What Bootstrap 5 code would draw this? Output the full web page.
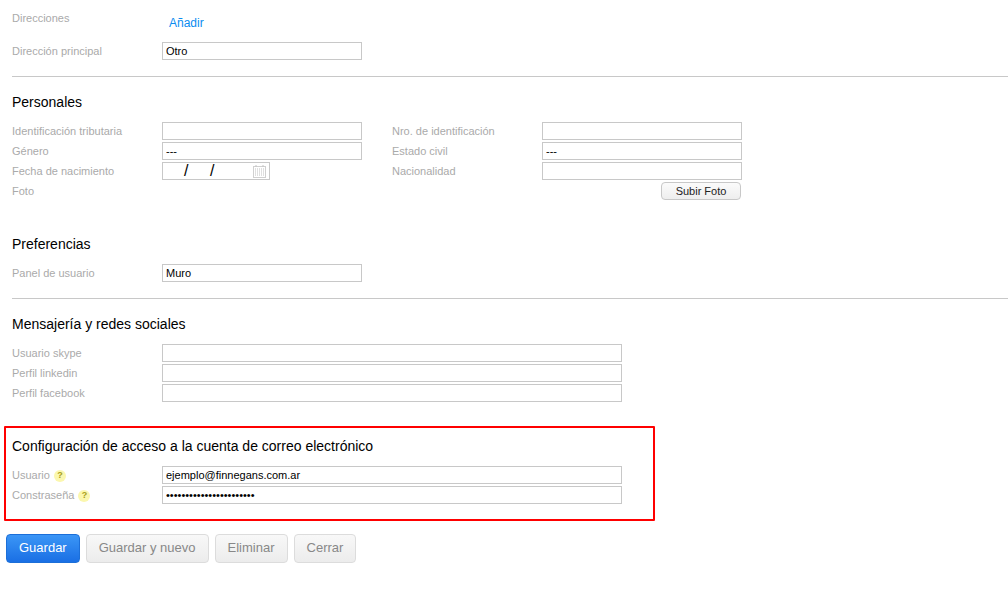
<!DOCTYPE html>
<html lang="es">
<head>
<meta charset="utf-8">
<title>Perfil</title>
<link href="https://cdn.jsdelivr.net/npm/bootstrap@5.3.0/dist/css/bootstrap.min.css" rel="stylesheet">
<style>
html,body{height:598px;overflow:hidden;background:#fff}
body{font-family:"Liberation Sans",Arial,sans-serif;font-size:11px;color:#000}
.sheet{padding:0 0 0 12px}
.frow{height:20px;align-items:center}
.flabel{width:150px;flex:none;color:#aaa;font-size:11px;line-height:14px;margin:0;display:flex;align-items:center}
.finput{display:block;width:200px;height:18px;padding:0 3px;border:1px solid #c8c8c8;border-radius:0;background:#fff;color:#000;font:11px "Liberation Sans",Arial,sans-serif;line-height:16px;outline:0}
.finput.wide{width:460px}
.addrow{height:41px;padding-top:11px}
.addrow .flabel{align-self:flex-start}
.addlink{color:#0a8cf0;font-size:12px;line-height:14px;text-decoration:none;margin:5px 0 0 7px}
.rule{margin:15px 0 0;border:0;border-top:1px solid #c8c8c8;opacity:1}
.shead{font-size:14px;font-weight:400;line-height:16px;margin:0 0 11px;color:#000}
.sblock{padding-top:17px}
.sblock.prefs{padding-top:35px}
.colone{width:380px;flex:none}
.datebox{width:108px;height:18px;border:1px solid #c8c8c8;position:relative;font-size:16px;line-height:16px}
.slash{position:absolute;top:0;font-family:"Liberation Sans",sans-serif}
.calicon{position:absolute;right:3px;top:1px}
.photorow{width:349px;justify-content:flex-end}
.upbtn{width:80px;height:18px;padding:0;font-size:11px;line-height:16px;color:#222;background:linear-gradient(#fbfbfb,#eee);border:1px solid #c8c8c8;border-radius:4px}
.redbox{margin:23px 0 0 -8px;width:651px;height:95px;border:2px solid #f00;padding:0 6px;border-radius:1px}
.redbox .sblock{padding-top:10px}
.hintq{display:inline-flex;align-items:center;justify-content:center;width:12px;height:12px;border-radius:50%;background:#fbf7ae;color:#a8a020;font-size:9px;font-weight:700;margin-left:4px;margin-top:1px;line-height:1}
.actions{margin:13px 0 0 -6px;gap:6px}
.actbtn{height:29px;padding:0 12px 2px;font-size:13px;line-height:25px;border-radius:4px;border:1px solid #dcdcdc;background:linear-gradient(#f8f8f8,#ececec);color:#888}
.actbtn.go{background:linear-gradient(#3b96f6,#1a6fe4);border-color:#1c6fd8;color:#fff}
</style>
</head>
<body>
<div class="sheet">
  <div class="d-flex addrow">
    <label class="flabel">Direcciones</label>
    <a href="#" class="addlink">Añadir</a>
  </div>
  <div class="d-flex frow">
    <label class="flabel" for="dirp">Dirección principal</label>
    <input id="dirp" class="finput" value="Otro">
  </div>
  <hr class="rule">
  <div class="sblock">
    <h2 class="shead">Personales</h2>
    <div class="d-flex">
      <div class="colone">
        <div class="d-flex frow"><label class="flabel">Identificación tributaria</label><input class="finput"></div>
        <div class="d-flex frow"><label class="flabel">Género</label><input class="finput" value="---"></div>
        <div class="d-flex frow"><label class="flabel">Fecha de nacimiento</label>
          <div class="datebox"><span class="slash" style="left:21px">/</span><span class="slash" style="left:47px">/</span>
            <svg class="calicon" width="13" height="14" viewBox="0 0 13 14"><rect x=".5" y="2.5" width="12" height="11" fill="#fff" stroke="#d0d0d0"/><path d="M3 1v2M10 1v2" stroke="#c4c4c4"/><path d="M2 5h9M2 7h9M2 9h9M2 11h9" stroke="#c0c0c0" stroke-dasharray="1 1"/></svg>
          </div>
        </div>
        <div class="d-flex frow"><label class="flabel">Foto</label></div>
      </div>
      <div>
        <div class="d-flex frow"><label class="flabel">Nro. de identificación</label><input class="finput"></div>
        <div class="d-flex frow"><label class="flabel">Estado civil</label><input class="finput" value="---"></div>
        <div class="d-flex frow"><label class="flabel">Nacionalidad</label><input class="finput"></div>
        <div class="d-flex frow photorow"><button type="button" class="upbtn">Subir Foto</button></div>
      </div>
    </div>
  </div>
  <div class="sblock prefs">
    <h2 class="shead">Preferencias</h2>
    <div class="d-flex frow"><label class="flabel">Panel de usuario</label><input class="finput" value="Muro"></div>
  </div>
  <hr class="rule">
  <div class="sblock">
    <h2 class="shead">Mensajería y redes sociales</h2>
    <div class="d-flex frow"><label class="flabel">Usuario skype</label><input class="finput wide"></div>
    <div class="d-flex frow"><label class="flabel">Perfil linkedin</label><input class="finput wide"></div>
    <div class="d-flex frow"><label class="flabel">Perfil facebook</label><input class="finput wide"></div>
  </div>
  <div class="redbox">
    <div class="sblock">
      <h2 class="shead">Configuración de acceso a la cuenta de correo electrónico</h2>
      <div class="d-flex frow"><label class="flabel">Usuario<span class="hintq">?</span></label><input class="finput wide" value="ejemplo@finnegans.com.ar"></div>
      <div class="d-flex frow"><label class="flabel">Constraseña<span class="hintq">?</span></label><input type="password" class="finput wide" value="abcdefghijklmnopqrstuvw"></div>
    </div>
  </div>
  <div class="d-flex actions">
    <button type="button" class="btn actbtn go">Guardar</button>
    <button type="button" class="btn actbtn">Guardar y nuevo</button>
    <button type="button" class="btn actbtn">Eliminar</button>
    <button type="button" class="btn actbtn">Cerrar</button>
  </div>
</div>
<script src="https://cdn.jsdelivr.net/npm/bootstrap@5.3.0/dist/js/bootstrap.bundle.min.js"></script>
</body>
</html>
